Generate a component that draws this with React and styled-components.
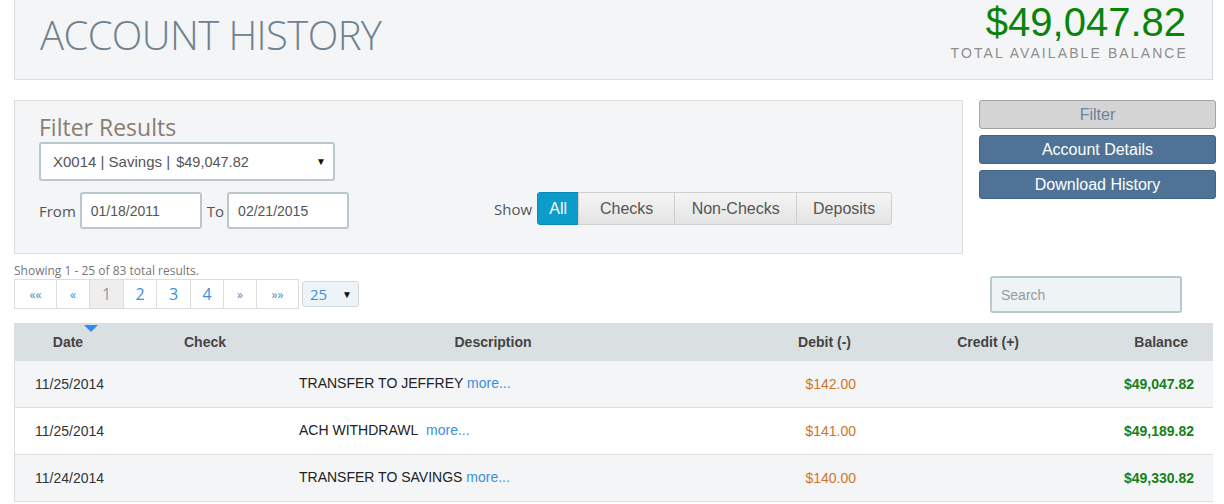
import React from "react";
import styled, { createGlobalStyle } from "styled-components";

const GlobalStyle = createGlobalStyle`
  html, body {
    margin: 0;
    padding: 0;
    background: #ffffff;
  }
  body {
    font-family: "Liberation Sans", Arial, sans-serif;
    color: #333;
  }
  * {
    box-sizing: border-box;
  }
`;

const Page = styled.div`
  width: 1224px;
  padding: 0 0 0 14px;
`;

const HeaderBox = styled.header`
  width: 1199px;
  height: 80px;
  background: #f4f5f7;
  border: 1px solid #dcdcdc;
  border-top: none;
  display: flex;
  justify-content: space-between;
  align-items: flex-start;
  padding: 0 26px 0 25px;
`;

const Title = styled.h1`
  margin: 7px 0 0;
  font-family: "Open Sans", sans-serif;
  font-weight: 300;
  font-size: 40px;
  letter-spacing: -0.6px;
  color: #6f8290;
`;

const BalanceBlock = styled.div`
  display: flex;
  flex-direction: column;
  align-items: flex-end;
  padding-top: 1px;
`;

const BigBalance = styled.div`
  font-size: 40px;
  line-height: 42px;
  color: #098309;
`;

const BalanceLabel = styled.div`
  font-size: 14px;
  letter-spacing: 2.1px;
  color: #8d8d8d;
  margin-top: 2px;
  margin-right: -2px;
`;

const FilterRow = styled.div`
  display: flex;
  gap: 16px;
  margin-top: 20px;
`;

const FilterBox = styled.section`
  width: 949px;
  flex-shrink: 0;
  height: 154px;
  background: #f4f5f7;
  border: 1px solid #dcdcdc;
  padding: 11px 24px 0;
`;

const FilterTitle = styled.h2`
  margin: 0;
  font-family: "Open Sans", sans-serif;
  font-weight: 400;
  font-size: 23px;
  line-height: 30px;
  color: #8a7d6e;
`;

const AccountSelect = styled.div`
  width: 296px;
  height: 39px;
  background: #fff;
  border: 2px solid #bac8ce;
  border-radius: 3px;
  display: flex;
  align-items: center;
  justify-content: space-between;
  padding: 0 7px 0 12px;
  color: #555;
  font-size: 15px;
`;

const SmallPart = styled.span`
  font-size: 14.5px;
  margin-left: 2px;
`;

const Caret = styled.span`
  font-size: 10px;
  color: #111;
`;

const ControlsRow = styled.div`
  display: flex;
  align-items: center;
  margin-top: 11px;
`;

const Label = styled.span`
  font-family: "Open Sans", sans-serif;
  font-size: 15px;
  color: #555;
  margin: 0 ${(p) => p.$gap || 5}px 0 0;
`;

const DateInput = styled.div`
  width: 122px;
  height: 37px;
  background: #fff;
  border: 2px solid #bac8ce;
  border-radius: 3px;
  display: flex;
  align-items: center;
  padding-left: 9px;
  font-size: 14px;
  color: #555;
  margin-right: 5px;
`;

const ShowGroup = styled.div`
  display: flex;
  align-items: center;
  margin-left: 140px;
  margin-bottom: 4px;
`;

const Segments = styled.div`
  display: flex;
  height: 33px;
`;

const Segment = styled.div`
  height: 100%;
  width: ${(p) => p.$w}px;
  display: flex;
  align-items: center;
  justify-content: center;
  font-size: 16px;
  border: 1px solid ${(p) => (p.$active ? "#0a8bb5" : "#cfcfcf")};
  margin-left: -1px;
  color: ${(p) => (p.$active ? "#fff" : "#555")};
  background: ${(p) =>
    p.$active ? "#0b9cca" : "linear-gradient(#f4f4f4, #e4e4e4)"};
  &:first-child {
    border-radius: 3px 0 0 3px;
    margin-left: 0;
  }
  &:last-child {
    border-radius: 0 3px 3px 0;
  }
`;

const SideButtons = styled.div`
  width: 237px;
  flex-shrink: 0;
  display: flex;
  flex-direction: column;
  gap: 6px;
`;

const SideButton = styled.div`
  height: 29px;
  display: flex;
  align-items: center;
  justify-content: center;
  border-radius: 3px;
  font-size: 16px;
  border: 1px solid ${(p) => (p.$muted ? "#a3a3a3" : "#43637f")};
  background: ${(p) => (p.$muted ? "#d4d4d4" : "#4e7397")};
  color: ${(p) => (p.$muted ? "#6c8397" : "#ffffff")};
`;

const ResultsBar = styled.div`
  width: 1199px;
  display: flex;
  justify-content: space-between;
  align-items: flex-end;
  margin-top: 9px;
  padding-right: 31px;
`;

const ResultsLeft = styled.div`
  display: flex;
  flex-direction: column;
`;

const ShowingText = styled.div`
  font-family: "Open Sans", sans-serif;
  font-size: 12px;
  color: #777;
  line-height: 16px;
`;

const PagerRow = styled.div`
  display: flex;
  align-items: center;
  gap: 3px;
`;

const Pager = styled.div`
  display: flex;
  height: 30px;
  border: 1px solid #dddddd;
`;

const PageCell = styled.div`
  width: ${(p) => p.$w}px;
  display: flex;
  align-items: center;
  justify-content: center;
  border-left: 1px solid #dddddd;
  font-family: "Open Sans", sans-serif;
  font-size: ${(p) => (p.$arrow ? 12 : 16)}px;
  color: ${(p) => (p.$current ? "#999" : "#3b8fe0")};
  background: ${(p) => (p.$current ? "#eeeeee" : "#ffffff")};
  &:first-child {
    border-left: none;
  }
`;

const PageSize = styled.div`
  width: 57px;
  height: 26px;
  background: #eef3f7;
  border: 1px solid #d2d8dc;
  border-radius: 3px;
  display: flex;
  align-items: center;
  justify-content: space-between;
  padding: 0 6px 0 7px;
  font-family: "Open Sans", sans-serif;
  font-size: 15px;
  color: #3b8fe0;
`;

const SearchBox = styled.div`
  width: 192px;
  height: 37px;
  background: #eef3f6;
  border: 2px solid #b8c8cf;
  border-radius: 3px;
  display: flex;
  align-items: center;
  padding-left: 9px;
  font-size: 14px;
  color: #9a9a9a;
  margin-bottom: -4px;
`;

const Table = styled.div`
  margin-top: 14px;
  width: 1199px;
  border-left: 1px solid #dddddd;
`;

const columns = "106px 168px 408px 184px 146px 187px";

const HeadRow = styled.div`
  display: grid;
  grid-template-columns: ${columns};
  height: 38px;
  background: #dadfe1;
  align-items: center;
  font-weight: 700;
  font-size: 14px;
  color: #444;
`;

const HeadCell = styled.div`
  position: relative;
  text-align: ${(p) => p.$align || "center"};
  padding-right: ${(p) => p.$pr || 0}px;
`;

const SortMark = styled.span`
  position: absolute;
  left: 69px;
  top: -9px;
  width: 0;
  height: 0;
  border-left: 7px solid transparent;
  border-right: 7px solid transparent;
  border-top: 7px solid #2b8ef0;
`;

const Row = styled.div`
  display: grid;
  grid-template-columns: ${columns};
  height: 47px;
  align-items: center;
  background: ${(p) => (p.$alt ? "#f4f5f7" : "#ffffff")};
  border-bottom: 1px solid #dddddd;
  font-size: 14px;
  color: #333;
`;

const Cell = styled.div`
  text-align: ${(p) => p.$align || "left"};
  padding-left: ${(p) => p.$pl || 0}px;
  padding-right: ${(p) => p.$pr || 0}px;
`;

const Desc = styled(Cell)`
  color: #222;
  margin-top: -3px;
`;

const More = styled.span`
  color: #3b8fe0;
`;

const Debit = styled(Cell)`
  color: #d0742c;
`;

const Balance = styled(Cell)`
  color: #17801a;
  font-weight: 700;
`;

const rows = [
  { date: "11/25/2014", desc: "TRANSFER TO JEFFREY", sep: " ", debit: "$142.00", bal: "$49,047.82" },
  { date: "11/25/2014", desc: "ACH WITHDRAWL", sep: "\u00a0\u00a0", debit: "$141.00", bal: "$49,189.82" },
  { date: "11/24/2014", desc: "TRANSFER TO SAVINGS", sep: " ", debit: "$140.00", bal: "$49,330.82" },
];

const pages = [
  { t: "\u00ab\u00ab", w: 41, arrow: true },
  { t: "\u00ab", w: 33, arrow: true },
  { t: "1", w: 34, current: true },
  { t: "2", w: 33 },
  { t: "3", w: 34 },
  { t: "4", w: 33 },
  { t: "\u00bb", w: 33, arrow: true },
  { t: "\u00bb\u00bb", w: 42, arrow: true },
];

export default function App() {
  return (
    <Page>
      <GlobalStyle />
      <HeaderBox>
        <Title>ACCOUNT HISTORY</Title>
        <BalanceBlock>
          <BigBalance>$49,047.82</BigBalance>
          <BalanceLabel>TOTAL AVAILABLE BALANCE</BalanceLabel>
        </BalanceBlock>
      </HeaderBox>

      <FilterRow>
        <FilterBox>
          <FilterTitle>Filter Results</FilterTitle>
          <AccountSelect>
            <span>
              X0014 | Savings | <SmallPart>$49,047.82</SmallPart>
            </span>
            <Caret>▼</Caret>
          </AccountSelect>
          <ControlsRow>
            <Label $gap={4}>From</Label>
            <DateInput>01/18/2011</DateInput>
            <Label $gap={3}>To</Label>
            <DateInput>02/21/2015</DateInput>
            <ShowGroup>
              <Label $gap={5}>Show</Label>
              <Segments>
                <Segment $active $w={42}>All</Segment>
                <Segment $w={97}>Checks</Segment>
                <Segment $w={123}>Non-Checks</Segment>
                <Segment $w={96}>Deposits</Segment>
              </Segments>
            </ShowGroup>
          </ControlsRow>
        </FilterBox>
        <SideButtons>
          <SideButton $muted>Filter</SideButton>
          <SideButton>Account Details</SideButton>
          <SideButton>Download History</SideButton>
        </SideButtons>
      </FilterRow>

      <ResultsBar>
        <ResultsLeft>
          <ShowingText>Showing 1 - 25 of 83 total results.</ShowingText>
          <PagerRow>
            <Pager>
              {pages.map((p, i) => (
                <PageCell key={i} $w={p.w} $arrow={p.arrow} $current={p.current}>
                  {p.t}
                </PageCell>
              ))}
            </Pager>
            <PageSize>
              <span>25</span>
              <Caret>▼</Caret>
            </PageSize>
          </PagerRow>
        </ResultsLeft>
        <SearchBox>Search</SearchBox>
      </ResultsBar>

      <Table>
        <HeadRow>
          <HeadCell>
            Date
            <SortMark />
          </HeadCell>
          <HeadCell>Check</HeadCell>
          <HeadCell>Description</HeadCell>
          <HeadCell $align="right" $pr={30}>Debit (-)</HeadCell>
          <HeadCell $align="right" $pr={8}>Credit (+)</HeadCell>
          <HeadCell $align="right" $pr={26}>Balance</HeadCell>
        </HeadRow>
        {rows.map((r, i) => (
          <Row key={i} $alt={i % 2 === 0}>
            <Cell $pl={20}>{r.date}</Cell>
            <Cell />
            <Desc $pl={10}>
              {r.desc}
              {r.sep}
              <More>more...</More>
            </Desc>
            <Debit $align="right" $pr={25}>{r.debit}</Debit>
            <Cell />
            <Balance $align="right" $pr={20}>{r.bal}</Balance>
          </Row>
        ))}
      </Table>
    </Page>
  );
}
